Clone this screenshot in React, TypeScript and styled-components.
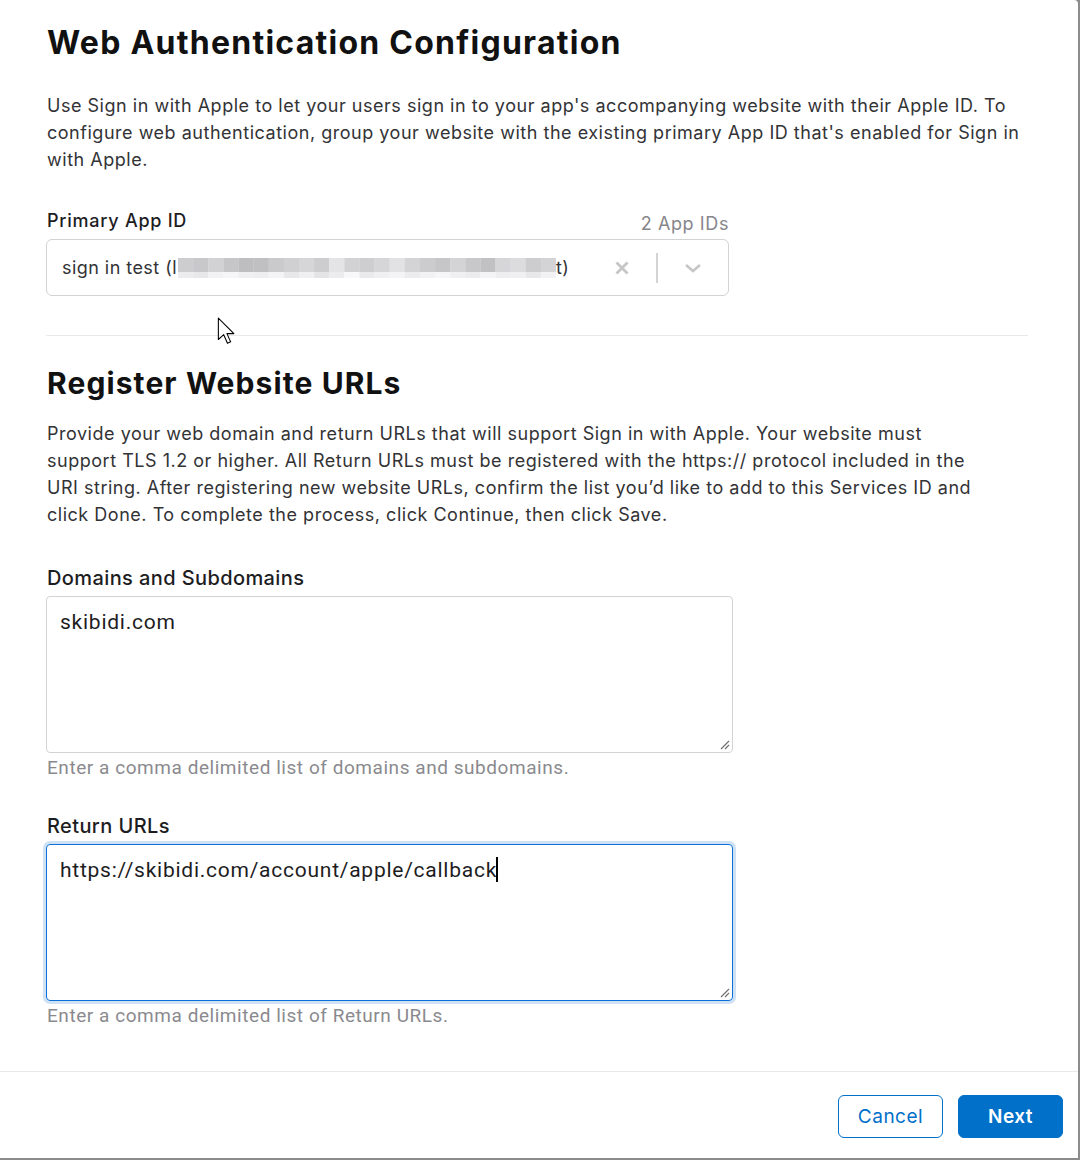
import React from "react";
import styled, { createGlobalStyle } from "styled-components";

const Global = createGlobalStyle`
  html, body { margin: 0; padding: 0; background: #8c8c8c; }
  body { font-family: Inter, "Noto Sans", "Liberation Sans", sans-serif; -webkit-font-smoothing: antialiased; }
  * { box-sizing: border-box; }
`;

const Frame = styled.div`
  width: 1080px;
  height: 1160px;
  padding: 0 2px 2px 0;
  background: #8c8c8c;
`;

const Modal = styled.div`
  position: relative;
  width: 1078px;
  height: 1158px;
  background: #ffffff;
  border-top-right-radius: 4px;
  display: flex;
  flex-direction: column;
`;

const Content = styled.div`
  padding: 22px 50px 0 46px;
  flex: 1;
  display: flex;
  flex-direction: column;
`;

const Title = styled.h1`
  margin: 0 0 0 1px;
  font-size: 32px;
  line-height: 42px;
  font-weight: 700;
  color: #111111;
  letter-spacing: 1.25px;
`;

const Heading = styled.h2`
  margin: 29px 0 0 1px;
  font-size: 30px;
  line-height: 36px;
  font-weight: 700;
  color: #111111;
  letter-spacing: 1.1px;
`;

const Para = styled.p<{ $top: number; $max?: number }>`
  margin: ${(p) => p.$top}px 0 0 1px;
  max-width: ${(p) => (p.$max ? `${p.$max}px` : "none")};
  font-size: 18px;
  line-height: 27px;
  color: #333336;
  font-weight: 400;
  letter-spacing: 0.52px;
`;

const LabelRow = styled.div<{ $top: number }>`
  margin-top: ${(p) => p.$top}px;
  width: 683px;
  display: flex;
  justify-content: space-between;
  align-items: flex-end;
`;

const Label = styled.div<{ $large?: boolean }>`
  margin-left: 1px;
  font-size: ${(p) => (p.$large ? "20px" : "18px")};
  letter-spacing: ${(p) => (p.$large ? "0.4px" : "0.75px")};
  line-height: 24px;
  font-weight: 500;
  color: #1d1d1f;
`;

const Count = styled.div`
  font-size: 18px;
  line-height: 24px;
  letter-spacing: 0.6px;
  color: #86868b;
  transform: translateY(3px);
`;

const Select = styled.div`
  margin-top: 6px;
  width: 683px;
  height: 57px;
  border: 1px solid #d2d2d7;
  border-radius: 6px;
  display: flex;
  align-items: center;
  padding: 0 0 0 15px;
`;

const SelectValue = styled.div`
  flex: 1;
  display: flex;
  align-items: center;
  font-size: 18px;
  letter-spacing: 0.45px;
  color: #333336;
  white-space: nowrap;
`;

const Indicators = styled.div`
  display: flex;
  align-items: center;
  height: 100%;
`;

const ClearBtn = styled.div`
  width: 40px;
  display: flex;
  justify-content: center;
  align-items: center;
  margin-right: 14px;
`;

const Sep = styled.div`
  width: 2px;
  height: 30px;
  background: #d4d4d4;
`;

const ChevronBtn = styled.div`
  width: 70px;
  display: flex;
  justify-content: center;
  align-items: center;
`;

const Divider = styled.div<{ $top: number }>`
  margin-top: ${(p) => p.$top}px;
  height: 1px;
  background: #e8e8ed;
`;

const TextBox = styled.div<{ $focused?: boolean }>`
  position: relative;
  margin-top: 6px;
  width: 687px;
  height: 157px;
  border: 1px solid ${(p) => (p.$focused ? "#0a6fd6" : "#d2d2d7")};
  border-radius: 4px;
  box-shadow: ${(p) => (p.$focused ? "0 0 0 3px #cfe2f5" : "none")};
  padding: 10px 13px;
  font-family: Roboto, "Liberation Sans", sans-serif;
  font-size: 21px;
  letter-spacing: 0.75px;
  line-height: 30px;
  color: #1d1d1f;
`;

const Caret = styled.span`
  display: inline-block;
  width: 1.5px;
  height: 25px;
  background: #000;
  vertical-align: -5px;
  margin-left: -1px;
`;

const Grip = styled.svg`
  position: absolute;
  right: 2px;
  bottom: 2px;
`;

const Help = styled.div`
  margin-top: 3px;
  margin-left: 1px;
  font-family: Roboto, "Liberation Sans", sans-serif;
  font-size: 19px;
  letter-spacing: 0.55px;
  line-height: 24px;
  color: #8a8a8e;
`;

const Footer = styled.div`
  border-top: 1px solid #e8e8ed;
  height: 87px;
  display: flex;
  justify-content: flex-end;
  align-items: flex-start;
  gap: 15px;
  padding: 23px 15px 0 0;
`;

const Button = styled.button<{ $primary?: boolean }>`
  height: 43px;
  width: 105px;
  border-radius: 6px;
  border: 1px solid #0070c9;
  background: ${(p) => (p.$primary ? "#0070c9" : "#ffffff")};
  color: ${(p) => (p.$primary ? "#ffffff" : "#0070c9")};
  font-family: Inter, "Noto Sans", sans-serif;
  font-size: 19px;
  letter-spacing: 0.5px;
  font-weight: ${(p) => (p.$primary ? 600 : 400)};
  cursor: pointer;
`;

const Pointer = styled.svg`
  position: absolute;
  left: 217px;
  top: 317px;
`;

const blur = [
  [205, 200, 210, 198, 190, 192, 202, 208, 214, 205, 228, 210, 206, 214, 226, 212, 204, 198, 212, 200, 193, 214, 220, 205, 212],
  [236, 232, 242, 246, 240, 238, 244, 232, 240, 228, 236, 248, 234, 240, 244, 236, 242, 246, 240, 236, 244, 238, 240, 232, 242],
];

const Blurred = () => (
  <svg width="378" height="20" viewBox="0 0 385 20" preserveAspectRatio="none" style={{ margin: "0 0 0 1px" }}>
    {blur[0].map((g, i) => (
      <rect key={"a" + i} x={i * 15.4} y={0} width={15.6} height={14} fill={`rgb(${g},${g},${g + 3})`} />
    ))}
    {blur[1].map((g, i) => (
      <rect key={"b" + i} x={i * 15.4} y={14} width={15.6} height={6} fill={`rgb(${g},${g},${g + 2})`} />
    ))}
  </svg>
);

const GripIcon = () => (
  <Grip width="12" height="12" viewBox="0 0 12 12">
    <path d="M11 3 L3 11 M11 7 L7 11" stroke="#6e6e6e" strokeWidth="1.1" fill="none" />
  </Grip>
);

export default function App() {
  return (
    <>
      <Global />
      <Frame>
        <Modal>
          <Content>
            <Title>Web Authentication Configuration</Title>
            <Para $top={28}>
              Use Sign in with Apple to let your users sign in to your app's accompanying website with their Apple ID. To
              configure web authentication, group your website with the existing primary App ID that's enabled for Sign in
              with Apple.
            </Para>
            <LabelRow $top={36}>
              <Label>Primary App ID</Label>
              <Count>2 App IDs</Count>
            </LabelRow>
            <Select>
              <SelectValue>
                sign in test (l
                <Blurred />
                t)
              </SelectValue>
              <Indicators>
                <ClearBtn>
                  <svg width="14" height="14" viewBox="0 0 14 14">
                    <path d="M1.5 1.5 L12.5 12.5 M12.5 1.5 L1.5 12.5" stroke="#c6c6c6" strokeWidth="2.8" strokeLinecap="butt" />
                  </svg>
                </ClearBtn>
                <Sep />
                <ChevronBtn>
                  <svg width="18" height="10" viewBox="0 0 18 10">
                    <path d="M2 2 L9 8 L16 2" stroke="#c6c6c6" strokeWidth="2.6" fill="none" />
                  </svg>
                </ChevronBtn>
              </Indicators>
            </Select>
            <Divider $top={39} />
            <Heading>Register Website URLs</Heading>
            <Para $top={19} $max={932}>
              Provide your web domain and return URLs that will support Sign in with Apple. Your website must support TLS
              1.2 or higher. All Return URLs must be registered with the https:// protocol included in the URI string.
              After registering new website URLs, confirm the list you’d like to add to this Services ID and click Done.
              To complete the process, click Continue, then click Save.
            </Para>
            <LabelRow $top={38}>
              <Label $large>Domains and Subdomains</Label>
            </LabelRow>
            <TextBox>
              skibidi.com
              <GripIcon />
            </TextBox>
            <Help>Enter a comma delimited list of domains and subdomains.</Help>
            <LabelRow $top={34}>
              <Label $large>Return URLs</Label>
            </LabelRow>
            <TextBox $focused>
              https://skibidi.com/account/apple/callback
              <Caret />
              <GripIcon />
            </TextBox>
            <Help>Enter a comma delimited list of Return URLs.</Help>
          </Content>
          <Footer>
            <Button>Cancel</Button>
            <Button $primary>Next</Button>
          </Footer>
          <Pointer width="22" height="30" viewBox="0 0 20 28">
            <path d="M1 1 L1 21 L6 16.5 L9.5 24.5 L12.5 23.2 L9 15.5 L15.5 15.5 Z" fill="#ffffff" stroke="#000000" strokeWidth="1" strokeLinejoin="round" />
          </Pointer>
        </Modal>
      </Frame>
    </>
  );
}
